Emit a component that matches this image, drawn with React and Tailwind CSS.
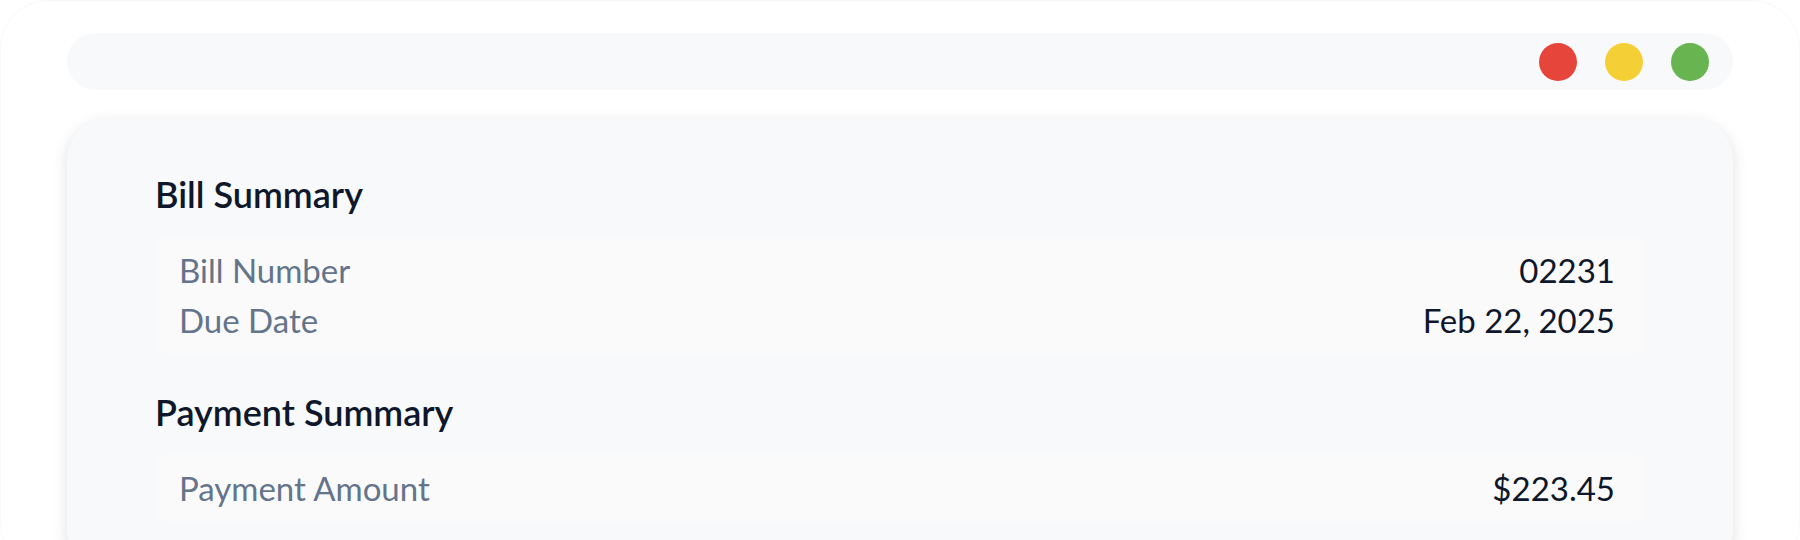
import React from "react";

const Row = ({ label, value }) => (
  <div className="flex items-center justify-between leading-[50px]">
    <span className="text-[#64748b]">{label}</span>
    <span className="text-[#0f172a]">{value}</span>
  </div>
);

const Section = ({ title, children, className = "" }) => (
  <div className={className}>
    <h2 className="text-[36px] leading-[40px] font-semibold text-[#0f172a]">{title}</h2>
    <div className="mt-[22px] rounded-xl bg-[#fafafa] pl-6 pr-[30px] py-[9px] text-[33px]">{children}</div>
  </div>
);

export default function App() {
  return (
    <div
      className="min-h-[540px] bg-white rounded-[48px] border border-[#f9f9f9] px-[66px] pt-[32px] overflow-hidden"
      style={{ fontFamily: "Lato, 'Noto Sans', sans-serif" }}
    >
      {/* title bar */}
      <div className="flex h-[57px] items-center justify-end gap-[28px] rounded-full bg-[#f8f9fb] pr-6">
        <span className="h-[38px] w-[38px] rounded-full bg-[#e5453a]" />
        <span className="h-[38px] w-[38px] rounded-full bg-[#f4cf35]" />
        <span className="h-[38px] w-[38px] rounded-full bg-[#67b450]" />
      </div>

      {/* bill card */}
      <div className="mt-[29px] rounded-[40px] bg-[#f8f9fb] px-[88px] pt-[55px] pb-12 shadow-[0_4px_16px_rgba(0,0,0,0.12)]">
        <Section title="Bill Summary">
          <Row label="Bill Number" value="02231" />
          <Row label="Due Date" value="Feb 22, 2025" />
        </Section>
        <Section title="Payment Summary" className="mt-[38px]">
          <Row label="Payment Amount" value="$223.45" />
        </Section>
      </div>
    </div>
  );
}
